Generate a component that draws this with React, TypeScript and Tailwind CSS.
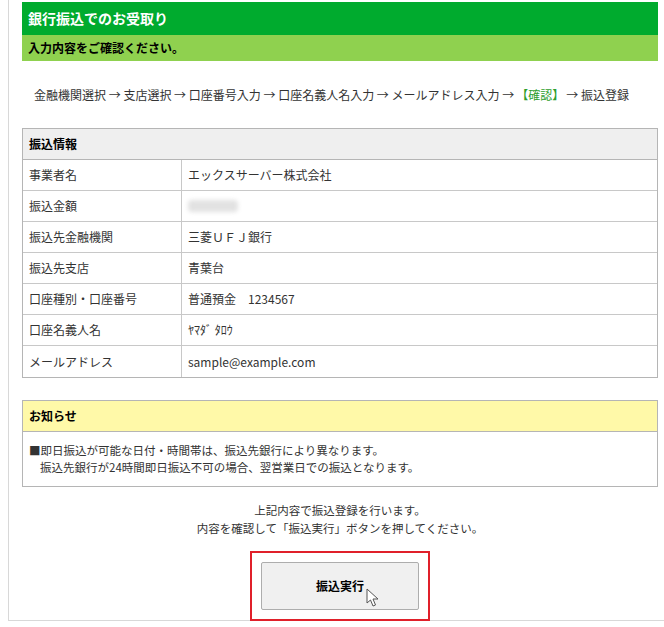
import React from 'react'

const rows: [string, string][] = [
  ['事業者名', 'エックスサーバー株式会社'],
  ['振込金額', ''],
  ['振込先金融機関', '三菱ＵＦＪ銀行'],
  ['振込先支店', '青葉台'],
  ['口座種別・口座番号', '普通預金　1234567'],
  ['口座名義人名', 'ﾔﾏﾀﾞ ﾀﾛｳ'],
  ['メールアドレス', 'sample@example.com'],
]

export default function App() {
  return (
    <div
      className="w-[664px] h-[627px] bg-white text-[12px] text-[#333] overflow-hidden"
      style={{ fontFamily: '"Noto Sans CJK JP", "Noto Sans", sans-serif' }}
    >
      <div className="ml-[8px] w-[670px] h-[621px] border-l border-b border-[#d8d8d8] pt-[2px]">
        <div className="ml-[13px] w-[636px]">
          <div className="bg-[#00ab2e] h-[33px] flex items-center px-[6px] text-white font-bold text-[14px]">
            銀行振込でのお受取り
          </div>
          <div className="bg-[#8fd14f] h-[26px] flex items-center px-[6px] font-bold text-black">
            入力内容をご確認ください。
          </div>
          <div className="h-[67px] flex items-center pl-[12px] text-[12px]">
            金融機関選択 → 支店選択 → 口座番号入力 → 口座名義人名入力 → メールアドレス入力 →
            <span className="text-[#2e9e2e] mx-[2px]">【確認】</span>→ 振込登録
          </div>
          <div className="border border-[#b5b5b5]">
            <div className="bg-[#efefef] h-[31px] flex items-center px-[6px] font-bold text-black border-b border-[#b5b5b5]">
              振込情報
            </div>
            {rows.map(([k, v], i) => (
              <div key={k} className={`flex h-[31px] ${i < rows.length - 1 ? 'border-b border-[#c8c8c8]' : 'h-[30px]'}`}>
                <div className="w-[159px] border-r border-[#c8c8c8] flex items-center px-[6px]">{k}</div>
                <div className="flex-1 flex items-center px-[6px]">
                  {i === 1 ? <div className="w-[50px] h-[12px] bg-[#e2e2e2] rounded-sm blur-[2px]" /> : v}
                </div>
              </div>
            ))}
          </div>
          <div className="mt-[22px] border border-[#b5b5b5]">
            <div className="bg-[#fff9a8] h-[31px] flex items-center px-[6px] font-bold text-black border-b border-[#b5b5b5]">
              お知らせ
            </div>
            <div className="px-[6px] py-[10px] leading-[17px] text-[11.5px]">
              <div>■即日振込が可能な日付・時間帯は、振込先銀行により異なります。</div>
              <div className="pl-[11px]">振込先銀行が24時間即日振込不可の場合、翌営業日での振込となります。</div>
            </div>
          </div>
          <div className="mt-[14px] text-center leading-[18px] text-[11.5px]">
            <div>上記内容で振込登録を行います。</div>
            <div>内容を確認して「振込実行」ボタンを押してください。</div>
          </div>
          <div className="mt-[14px] flex justify-center">
            <div className="border-2 border-[#e0202a] p-[9px]">
              <div className="relative w-[158px] h-[48px] bg-[#f0f0f0] border border-[#adadad] rounded-[2px] flex items-center justify-center font-bold text-black">
                振込実行
                <svg className="absolute left-[104px] top-[25px]" width="14" height="20" viewBox="0 0 14 20">
                  <path d="M1 1 L1 15 L4.5 12 L7 18 L9.5 17 L7 11 L12 11 Z" fill="#fff" stroke="#555" strokeWidth="1" />
                </svg>
              </div>
            </div>
          </div>
        </div>
      </div>
    </div>
  )
}
